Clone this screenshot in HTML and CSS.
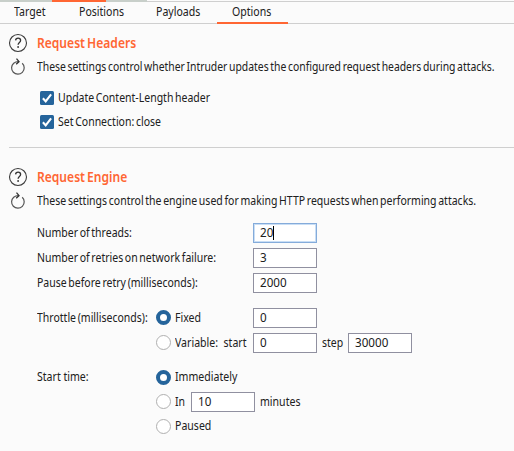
FILE: index.html
```
<!DOCTYPE html>
<html lang="en">
<head>
<meta charset="utf-8">
<title>Intruder options</title>
<link rel="stylesheet" href="styles.css">
</head>
<body>
<svg width="0" height="0" class="defs">
  <symbol id="help" viewBox="0 0 20 20">
    <circle cx="10" cy="10" r="8.500" fill="none" stroke="#3c3c3c" stroke-width="1.100"/>
    <path d="M7.600 7.400C7.700 6 8.700 5.200 10.100 5.200c1.600 0 2.500.9 2.500 2.200 0 2-2.500 2.200-2.500 4.400" fill="none" stroke="#333" stroke-width="1.300"/>
    <circle cx="10.100" cy="14" r=".9" fill="#333"/>
  </symbol>
  <symbol id="reset" viewBox="0 0 20 20">
    <path d="M14.200 6.300A6.300 6.300 0 1 1 5.700 6.200Q7.800 4.500 10.600 4.600" fill="none" stroke="#555" stroke-width="1.200"/>
    <path d="M8.500 1.700L11 4.600L8.200 7.200" fill="none" stroke="#333" stroke-width="1.300"/>
  </symbol>
  <symbol id="check" viewBox="0 0 14 14">
    <path d="M2.900 7.200L5.700 10.400L11.100 3.400" fill="none" stroke="#fff" stroke-width="2.100"/>
  </symbol>
</svg>

<div class="attack-tabs"><i class="past"></i><i class="current"></i><i class="next"></i><i class="rest"></i></div>
<nav class="tabs">
  <a class="tab target"><span class="t wide">Target</span></a>
  <a class="tab positions"><span class="t wide">Positions</span></a>
  <a class="tab payloads"><span class="t wide">Payloads</span></a>
  <a class="tab options active"><span class="t wide">Options</span></a>
</nav>

<section class="headers">
  <div class="row title"><svg class="icon"><use href="#help"/></svg><h2 class="t">Request Headers</h2></div>
  <div class="row desc"><svg class="icon"><use href="#reset"/></svg><p class="t long">These settings control whether Intruder updates the configured request headers during attacks.</p></div>
  <div class="checks">
    <label class="check"><svg class="box"><use href="#check"/></svg><span class="t">Update Content-Length header</span></label>
    <label class="check"><svg class="box"><use href="#check"/></svg><span class="t">Set Connection: close</span></label>
  </div>
</section>
<section class="engine">
  <div class="row title"><svg class="icon"><use href="#help"/></svg><h2 class="t">Request Engine</h2></div>
  <div class="row desc"><svg class="icon"><use href="#reset"/></svg><p class="t">These settings control the engine used for making HTTP requests when performing attacks.</p></div>
  <div class="form">
    <div class="field"><span class="label"><span class="t">Number of threads:</span></span><span class="input focus"><span class="t num">20</span><i class="caret"></i></span></div>
    <div class="field"><span class="label"><span class="t">Number of retries on network failure:</span></span><span class="input"><span class="t num">3</span></span></div>
    <div class="field"><span class="label"><span class="t">Pause before retry (milliseconds):</span></span><span class="input"><span class="t num">2000</span></span></div>
  </div>
  <div class="form throttle">
    <div class="field"><span class="name"><span class="t">Throttle (milliseconds):</span></span><span class="choice"><i class="radio on"></i><span class="t wide">Fixed</span></span><span class="input"><span class="t num">0</span></span></div>
    <div class="field"><span class="name"></span><span class="choice"><i class="radio"></i><span class="t wide">Variable:&nbsp; start</span></span><span class="input"><span class="t num">0</span></span><span class="step"><span class="t">step</span></span><span class="input"><span class="t num">30000</span></span></div>
  </div>
  <div class="form start">
    <div class="field"><span class="name"><span class="t wide">Start time:</span></span><span class="choice"><i class="radio on"></i><span class="t wide">Immediately</span></span></div>
    <div class="field"><span class="name"></span><span class="choice in"><i class="radio"></i><span class="t">In</span></span><span class="input"><span class="t num">10</span></span><span class="minutes"><span class="t wide">minutes</span></span></div>
    <div class="field"><span class="name"></span><span class="choice"><i class="radio"></i><span class="t wide">Paused</span></span></div>
  </div>
</section>
</body>
</html>
```

FILE: styles.css
```
* { box-sizing: border-box; }
body {
  margin: 0;
  height: 451px;
  overflow: hidden;
  background: #fbfbfb;
  color: #202020;
  font: 12px/20px "Noto Sans", sans-serif;
  white-space: nowrap;
}
.defs { display: block; }
h2, p { margin: 0; }
/* condensed interface lettering */
.t { display: inline-block; flex: none; transform: scaleX(.875); transform-origin: 0 50%; word-spacing: -1.200px; }
.wide { transform: scaleX(.88); word-spacing: 0; }
.long { transform: scaleX(.865); }
.num { transform: scaleX(.97); }
.attack-tabs { display: flex; height: 2px; }
.past, .next { background: #c8cfca; }
.past { width: 52px; }
.current { width: 54px; background: #ff6633; }
.next { width: 41px; }
.rest { flex: 1; border-bottom: 1px solid #cfcfcf; margin-top: 1px; }
.tabs { display: flex; height: 22px; box-shadow: inset 0 -1px #cfcfcf; }
.tab { height: 22px; padding-left: 14px; }
.target { width: 65px; }
.positions { width: 77px; }
.payloads { width: 75px; }
.options { width: 71px; padding-left: 15px; }
.active { border-bottom: 2px solid #ff6633; }
.headers { height: 124px; margin-left: 9px; padding-top: 7px; border-bottom: 1px solid #cfcfcf; }
.engine { margin-left: 9px; padding-top: 17px; }
.row { display: flex; align-items: center; gap: 9px; height: 24px; margin-left: -1px; }
.icon { width: 20px; height: 20px; flex: none; }
h2 { font-size: 14px; line-height: 20px; font-weight: 600; color: #ff6633; }
h2.t { transform: scaleX(.862); }
.checks { margin: 7px 0 0 31px; }
.check { display: flex; align-items: center; gap: 4px; height: 24px; }
.box { width: 14px; height: 14px; border-radius: 1.500px; background: #25649b; }
.form { margin: 7px 0 0 28px; }
.field { display: flex; align-items: center; height: 25px; }
.label { width: 216px; }
.name { width: 119px; }
.input {
  position: relative;
  width: 64px;
  height: 20px;
  padding-left: 6px;
  border: 1px solid #9090a0;
  background: #fff;
  line-height: 18px;
}
.input .t { line-height: 18px; vertical-align: top; }
.focus { border-color: #84abda; box-shadow: inset 0 0 0 1px #c9def5; }
.caret { position: absolute; left: 19px; top: 2px; width: 1px; height: 14px; background: #000; }
.throttle { margin-top: 10px; }
.choice { display: flex; align-items: center; gap: 4px; width: 97px; }
.radio { width: 15px; height: 15px; flex: none; border: 1px solid #b0b0b0; border-radius: 50%; background: #fff; }
.on { border: 4px solid #25649b; }
.step { width: 31px; padding-left: 5px; }
.start { margin-top: 10px; }
.start .field { height: 24.500px; }
.in { width: 35px; }
.minutes { padding-left: 5px; }
```
